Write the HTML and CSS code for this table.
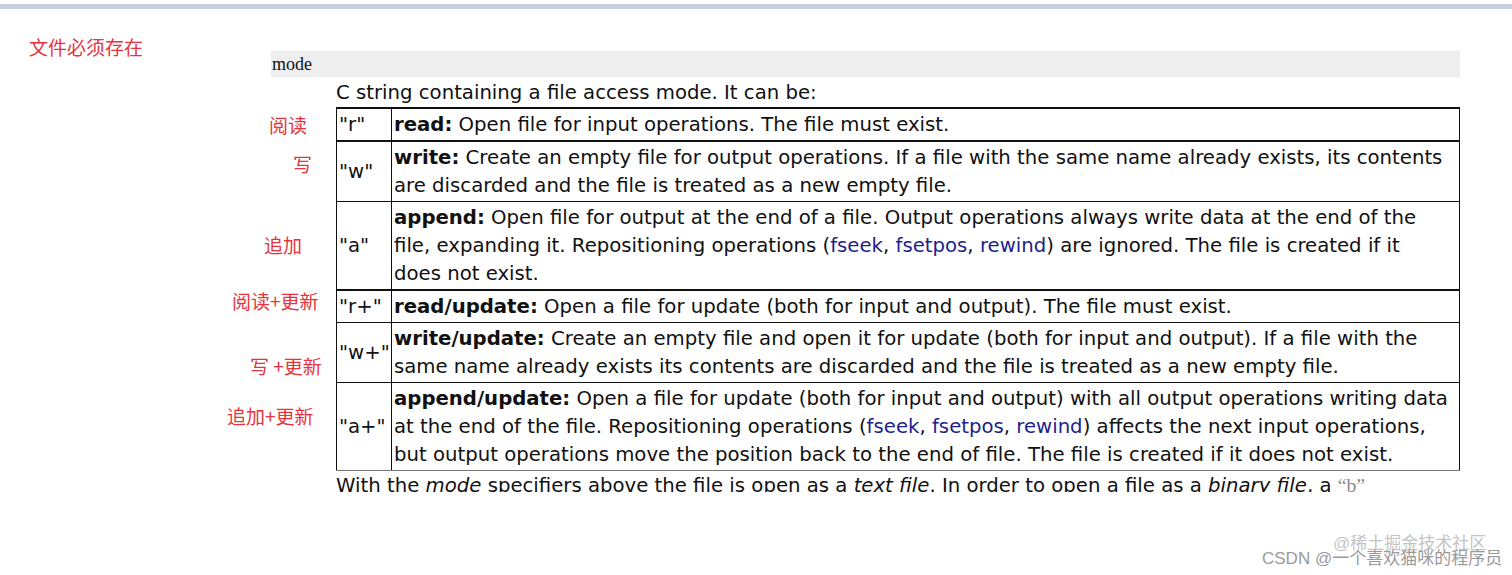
FILE: index.html
```html
<!DOCTYPE html>
<html lang="zh-CN">
<head>
<meta charset="utf-8">
<title>fopen mode</title>
<link rel="stylesheet" href="styles.css">
</head>
<body>
<div class="topbar"></div>
<div class="sheet">
  <aside class="side"><span class="note">文件必须存在</span></aside>
  <main class="doc">
    <div class="param">mode</div>
    <div class="param-body">
      <p class="lead">C string containing a file access mode. It can be:</p>
      <table class="modes">
        <colgroup><col class="c-key"><col class="c-val"></colgroup>
        <tr class="r1"><td class="key">"r"</td><td class="val"><b>read:</b> Open file for input operations. The file must exist.</td></tr>
        <tr class="r2"><td class="key">"w"</td><td class="val"><b>write:</b> Create an empty file for output operations. If a file with the same name already exists, its contents<br>are discarded and the file is treated as a new empty file.</td></tr>
        <tr class="r3"><td class="key">"a"</td><td class="val"><b>append:</b> Open file for output at the end of a file. Output operations always write data at the end of the<br>file, expanding it. Repositioning operations (<a>fseek</a>, <a>fsetpos</a>, <a>rewind</a>) are ignored. The file is created if it<br>does not exist.</td></tr>
        <tr class="r4"><td class="key">"r+"</td><td class="val"><b>read/update:</b> Open a file for update (both for input and output). The file must exist.</td></tr>
        <tr class="r5"><td class="key">"w+"</td><td class="val"><b>write/update:</b> Create an empty file and open it for update (both for input and output). If a file with the<br>same name already exists its contents are discarded and the file is treated as a new empty file.</td></tr>
        <tr class="r6"><td class="key">"a+"</td><td class="val"><b>append/update:</b> Open a file for update (both for input and output) with all output operations writing data<br>at the end of the file. Repositioning operations (<a>fseek</a>, <a>fsetpos</a>, <a>rewind</a>) affects the next input operations,<br>but output operations move the position back to the end of file. The file is created if it does not exist.</td></tr>
      </table>
      <div class="tail"><p>With the <i>mode</i> specifiers above the file is open as a <i>text file</i>. In order to open a file as a <i>binary file</i>, a <span class="q">“b”</span></p></div>
    </div>
  </main>
</div>
<div class="notes">
  <span class="note n-r">阅读</span>
  <span class="note n-w">写</span>
  <span class="note n-a">追加</span>
  <span class="note n-rp">阅读+更新</span>
  <span class="note n-wp">写 +更新</span>
  <span class="note n-ap">追加+更新</span>
</div>
<div class="wm">
  <span class="wm-top">@稀土掘金技术社区</span>
  <span class="wm-bot">CSDN @一个喜欢猫咪的程序员</span>
</div>
</body>
</html>
```
FILE: styles.css
```css
html, body {
  margin: 0;
  padding: 0;
  background: #ffffff;
}
body {
  position: relative;
  width: 1512px;
  height: 575px;
  overflow: hidden;
  font-family: "DejaVu Sans", Verdana, sans-serif;
  color: #111;
}
.topbar {
  margin-top: 4px;
  height: 5px;
  background: #c7d0dc;
}
.sheet {
  display: grid;
  grid-template-columns: 271px 1189px;
}
.note {
  font-family: "Noto Sans CJK SC", sans-serif;
  font-size: 19px;
  line-height: 19px;
  color: #e6343c;
  white-space: pre;
}
.side {
  padding: 28px 0 0 29px;
}
.param {
  margin-top: 42px;
  height: 26px;
  background: #eeeeee;
  font-family: "Liberation Serif", serif;
  font-size: 18px;
  line-height: 26px;
  padding-left: 1px;
}
.param-body {
  margin-left: 65px;
}
.lead {
  margin: 2px 0 0;
  font-size: 19.7px;
  line-height: 28px;
}
.modes {
  border-collapse: collapse;
  table-layout: fixed;
  width: 1124px;
  font-size: 19.7px;
  line-height: 28px;
}
.c-key { width: 55px; }
.modes td {
  border: 1px solid #111;
  padding: 2px 1px 1px 2px;
  white-space: nowrap;
}
.modes tr.r1 td, .modes tr.r2 td, .modes tr.r4 td {
  border-top-width: 2px;
}
.modes tr.r6 td {
  border-bottom-color: #777;
}
.modes .key {
  vertical-align: middle;
  overflow: visible;
}
.modes .val {
  vertical-align: top;
}
.modes a {
  color: #1f1f8c;
  text-decoration: none;
}
.tail {
  height: 21px;
  overflow: hidden;
}
.tail p {
  margin: 0;
  font-size: 19.7px;
  line-height: 28px;
  white-space: nowrap;
}
.q {
  color: #888;
  font-family: "Liberation Serif", serif;
}
.notes .note {
  position: absolute;
}
.n-r { left: 269px; top: 115px; }
.n-w { left: 293px; top: 154px; }
.n-a { left: 264px; top: 235px; }
.n-rp { left: 232px; top: 291px; }
.n-wp { left: 250px; top: 356px; }
.n-ap { left: 227px; top: 406px; }
.wm {
  position: absolute;
  left: 0;
  top: 0;
}
.wm span {
  position: absolute;
  white-space: nowrap;
  font-family: "Liberation Sans", "Noto Sans CJK SC", sans-serif;
  font-size: 17px;
  line-height: 17px;
}
.wm-top {
  left: 1333px;
  top: 535px;
  color: #c4c4c4;
}
.wm-bot {
  left: 1262px;
  top: 550px;
  color: #9a9a9a;
}
```
